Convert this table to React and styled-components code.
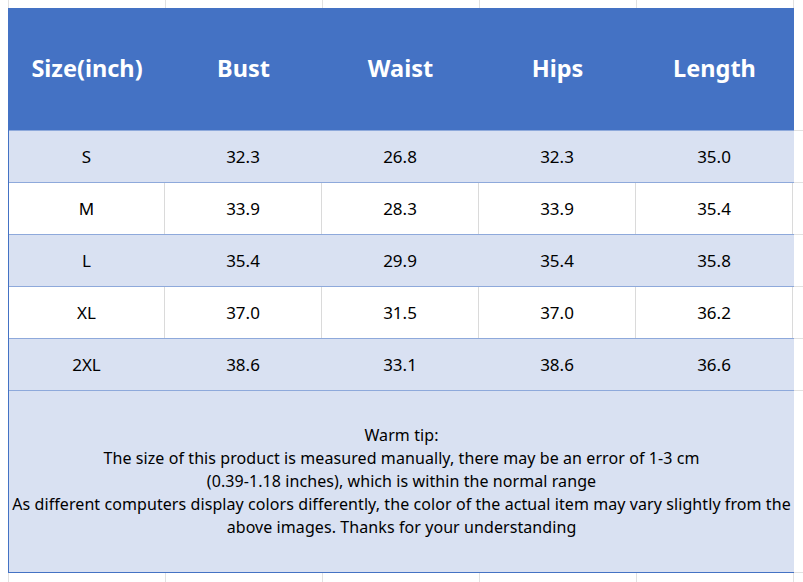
import React from 'react';
import styled, { createGlobalStyle } from 'styled-components';

const GlobalStyle = createGlobalStyle`
  html, body {
    margin: 0;
    padding: 0;
    background-color: #fff;
  }
  body {
    font-family: "Noto Sans", "Open Sans", sans-serif;
    background-image: repeating-linear-gradient(
      to right,
      #e1e1e1 0 1px,
      transparent 1px 157px
    );
    background-position: 8px 0;
    min-height: 582px;
  }
`;

const columns = ['Size(inch)', 'Bust', 'Waist', 'Hips', 'Length'];

const rows = [
  ['S', '32.3', '26.8', '32.3', '35.0'],
  ['M', '33.9', '28.3', '33.9', '35.4'],
  ['L', '35.4', '29.9', '35.4', '35.8'],
  ['XL', '37.0', '31.5', '37.0', '36.2'],
  ['2XL', '38.6', '33.1', '38.6', '36.6'],
];

const tipLines = [
  'Warm tip:',
  'The size of this product is measured manually, there may be an error of 1-3 cm',
  '(0.39-1.18 inches), which is within the normal range',
  'As different computers display colors differently, the color of the actual item may vary slightly from the',
  'above images. Thanks for your understanding',
];

const Sheet = styled.div`
  display: flex;
  padding: 8px 0 0 8px;
`;

const Table = styled.div`
  width: 786px;
  flex: none;
  display: flex;
  flex-direction: column;
  border-left: 1px solid #4472c4;
  box-sizing: border-box;
`;

// the bit of empty sheet right of the table keeps its row lines
const Margin = styled.div`
  flex: 1;
  display: flex;
  flex-direction: column;
`;

const MarginCell = styled.div`
  height: ${(p) => p.h}px;
  box-sizing: border-box;
  border-top: ${(p) => (p.top ? '1px solid #e1e1e1' : 'none')};
  border-bottom: ${(p) => (p.bottom ? '1px solid #e1e1e1' : 'none')};
`;

const HeaderRow = styled.div`
  display: grid;
  grid-template-columns: 156px repeat(4, 157px);
  height: 122px;
  background: #4472c4;
`;

const HeadCell = styled.div`
  display: flex;
  align-items: center;
  justify-content: center;
  color: #fff;
  font-weight: 700;
  font-size: 23.5px;
  padding-bottom: 2px;
`;

const Row = styled.div`
  display: grid;
  grid-template-columns: 156px repeat(4, 157px);
  height: ${(p) => (p.first ? 53 : 52)}px;
  box-sizing: border-box;
  background: ${(p) => (p.shaded ? '#d9e1f2' : '#fff')};
  border-top: ${(p) => (p.first ? '1px solid #8ea9db' : 'none')};
  border-bottom: 1px solid #8ea9db;
`;

const Cell = styled.div`
  display: flex;
  align-items: center;
  justify-content: center;
  font-size: 17px;
  color: #000;
  border-right: 1px solid ${(p) => (p.shaded ? 'transparent' : '#dadada')};
`;

const Tip = styled.div`
  height: 182px;
  box-sizing: border-box;
  background: #d9e1f2;
  border-bottom: 1px solid #4472c4;
  display: flex;
  flex-direction: column;
  align-items: center;
  justify-content: center;
  padding-bottom: 1px;
  font-size: 16px;
  line-height: 23px;
  letter-spacing: 0.08px;
  color: #000;
`;

const TipLine = styled.span`
  white-space: nowrap;
`;

export default function App() {
  return (
    <>
      <GlobalStyle />
      <Sheet>
        <Table>
          <HeaderRow>
            {columns.map((c) => (
              <HeadCell key={c}>{c}</HeadCell>
            ))}
          </HeaderRow>
          {rows.map((r, i) => {
            const shaded = i % 2 === 0;
            return (
              <Row key={r[0]} shaded={shaded} first={i === 0}>
                {r.map((v, j) => (
                  <Cell key={j} shaded={shaded}>{v}</Cell>
                ))}
              </Row>
            );
          })}
          <Tip>
            {tipLines.map((l) => (
              <TipLine key={l}>{l}</TipLine>
            ))}
          </Tip>
        </Table>
        <Margin>
          <MarginCell h={122} />
          {rows.map((r, i) => (
            <MarginCell key={r[0]} h={i === 0 ? 53 : 52} top={i === 0} bottom />
          ))}
          <MarginCell h={182} bottom />
        </Margin>
      </Sheet>
    </>
  );
}
